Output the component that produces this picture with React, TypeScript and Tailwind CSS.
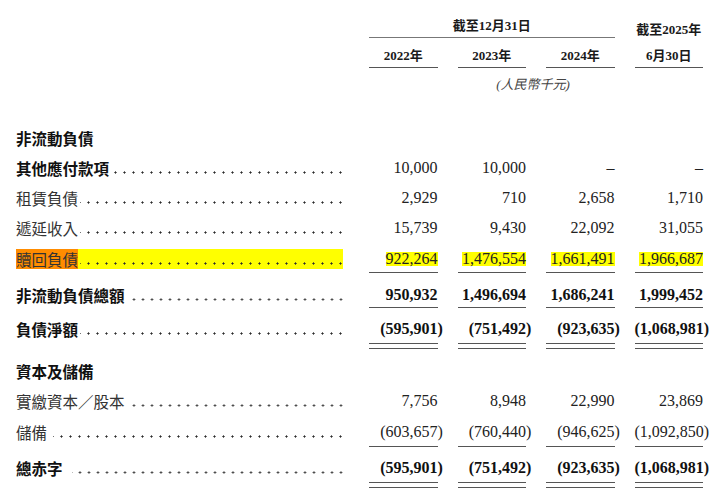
const serif = "font-['Liberation_Serif','Noto_Sans_CJK_TC',serif]";
const sans = "font-['Noto_Sans_CJK_TC','Noto_Sans_CJK_JP',sans-serif]";

type Row = {
  label: string;
  pt: string;
  section?: boolean;
  boldLabel?: boolean;
  boldNums?: boolean;
  hl?: boolean;
  vals?: string[];
  line?: "single" | "double";
  lineMt?: string;
  dotsMl?: string;
};

const rows: Row[] = [
  { label: "非流動負債", section: true, pt: "pt-[35px]" },
  { label: "其他應付款項", boldLabel: true, pt: "pt-[10px]", vals: ["10,000", "10,000", "–", "–"] },
  { label: "租賃負債", pt: "pt-[10px]", vals: ["2,929", "710", "2,658", "1,710"] },
  { label: "遞延收入", pt: "pt-[10px]", vals: ["15,739", "9,430", "22,092", "31,055"] },
  {
    label: "贖回負債",
    hl: true,
    pt: "pt-[11px]",
    vals: ["922,264", "1,476,554", "1,661,491", "1,966,687"],
    line: "single",
    lineMt: "mt-[3px]",
  },
  {
    label: "非流動負債總額",
    boldLabel: true,
    boldNums: true,
    pt: "pt-[12px]",
    vals: ["950,932", "1,496,694", "1,686,241", "1,999,452"],
    line: "single",
    lineMt: "mt-[2px]",
    dotsMl: "ml-[4px]",
  },
  {
    label: "負債淨額",
    boldLabel: true,
    boldNums: true,
    pt: "pt-[11px]",
    vals: ["(595,901)", "(751,492)", "(923,635)", "(1,068,981)"],
    line: "double",
    lineMt: "mt-[4px]",
  },
  { label: "資本及儲備", section: true, pt: "pt-[12px]" },
  { label: "實繳資本／股本", pt: "pt-[10px]", vals: ["7,756", "8,948", "22,990", "23,869"] },
  {
    label: "儲備",
    pt: "pt-[11px]",
    vals: ["(603,657)", "(760,440)", "(946,625)", "(1,092,850)"],
    line: "single",
    lineMt: "mt-[4px]",
    dotsMl: "ml-[6px]",
  },
  {
    label: "總赤字",
    boldLabel: true,
    boldNums: true,
    pt: "pt-[11px]",
    vals: ["(595,901)", "(751,492)", "(923,635)", "(1,068,981)"],
    line: "double",
    lineMt: "mt-[4px]",
    dotsMl: "ml-[9px]",
  },
];

function Num({ v, hl }: { v: string; hl?: boolean }) {
  const neg = v.startsWith("(");
  const body = neg ? v.slice(0, -1) : v;
  return (
    <span className={hl ? "bg-[#ffff00] inline-block leading-[14px]" : ""}>
      {body}
      {neg && <span className="-mr-[5.3px]">)</span>}
    </span>
  );
}

// dot leaders drawn as a repeating background
function Dots({ ml }: { ml?: string }) {
  return (
    <span
      className={`h-full min-w-0 flex-1 bg-[radial-gradient(circle,#2a2a2a_0.85px,transparent_1.3px)] bg-size-[9px_3px] bg-position-[right_-2px_bottom_4px] bg-repeat-x ${
        ml ?? "ml-[2px]"
      }`}
    />
  );
}

export default function App() {
  return (
    <div className="h-[490px] w-[722px] overflow-hidden bg-white pl-4 text-[#1a1a1a]">
      {/* column headers */}
      <div className={`flex ${serif} text-[13px] font-bold leading-[16px]`}>
        <div className="w-[327px]" />
        <div className="ml-[26px] flex gap-5">
          <div className="w-[245.5px]">
            <div className="flex h-[38px] items-end justify-center border-b border-[#777] pb-[3px]">
              截至12月31日
            </div>
            <div className="flex gap-5">
              {["2022年", "2023年", "2024年"].map((y) => (
                <div key={y} className="h-[30px] w-[68.5px] border-b border-[#555] pt-[10px] text-center">
                  {y}
                </div>
              ))}
            </div>
          </div>
          <div className="w-[68.5px]">
            <div className="flex h-[38px] items-end justify-center">截至2025年</div>
            <div className="h-[30px] border-b border-[#555] pt-[10px] text-center">6月30日</div>
          </div>
        </div>
      </div>
      <div className="flex">
        <div className="w-[327px]" />
        <div
          className={`ml-[26px] w-[334px] pr-[6px] pt-[9px] text-center text-[13px] italic leading-[16px] text-[#444] ${serif}`}
        >
          (人民幣千元)
        </div>
      </div>

      {/* body */}
      {rows.map((r) => (
        <div key={r.label} className={`flex items-start ${r.pt}`}>
          <div
            className={`flex h-[20px] w-[327px] text-[15.5px] leading-[20px] ${sans} ${
              r.hl ? "bg-[#ffff00]" : ""
            }`}
          >
            <span
              className={`whitespace-nowrap ${r.boldLabel || r.section ? "font-bold text-[#111]" : "text-[#333]"} ${
                r.hl ? "bg-[#ff8c00] text-[#3a2500]" : ""
              }`}
            >
              {r.label}
            </span>
            {!r.section && <Dots ml={r.dotsMl} />}
          </div>
          {r.vals && (
            <div className="ml-[26px] flex gap-5">
              {r.vals.map((v, i) => (
                <div key={i} className="w-[68.5px]">
                  <div
                    className={`h-[20px] whitespace-nowrap text-right text-[16px] leading-[20px] ${serif} ${
                      r.boldNums ? "font-bold text-[#111]" : "text-[#222]"
                    }`}
                  >
                    <Num v={v} hl={r.hl} />
                  </div>
                  {r.line && <div className={`h-px bg-[#555] ${r.lineMt}`} />}
                  {r.line === "double" && <div className="mt-[4px] h-px bg-[#555]" />}
                </div>
              ))}
            </div>
          )}
        </div>
      ))}
    </div>
  );
}
